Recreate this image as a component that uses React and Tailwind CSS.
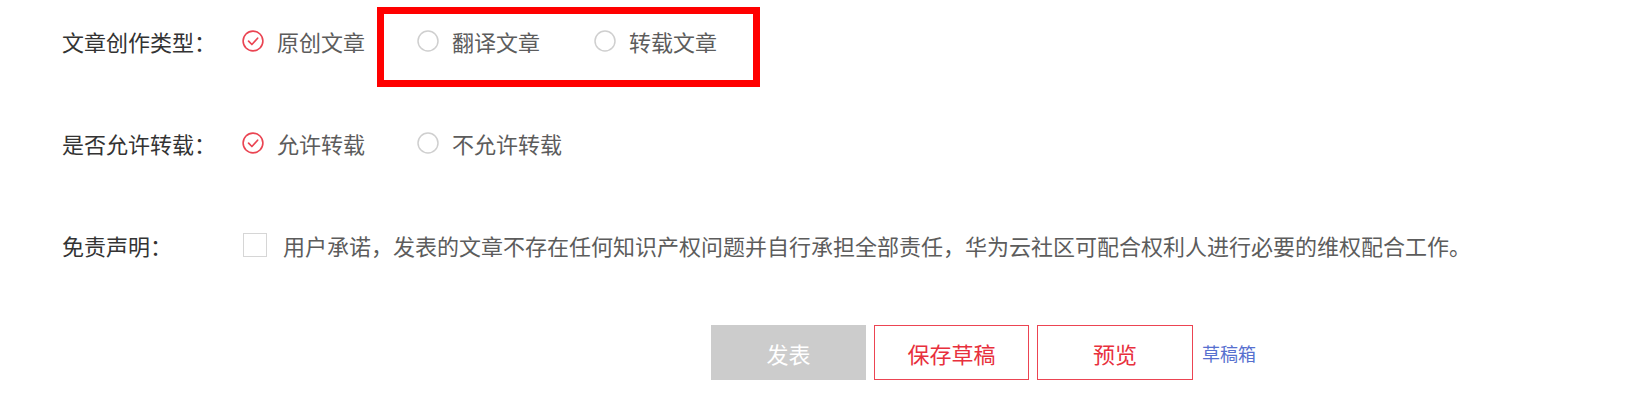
import React from "react";

const font = { fontFamily: '"Noto Sans CJK SC", "Noto Sans", sans-serif' };

function CheckedRadio() {
  return (
    <svg width="22" height="22" viewBox="0 0 22 22" className="shrink-0">
      <circle cx="11" cy="11" r="9.9" fill="none" stroke="#ea4452" strokeWidth="1.6" />
      <path d="M6.6 11.2 L9.9 14.5 L15.6 8.2" fill="none" stroke="#ea4452" strokeWidth="1.7" strokeLinecap="round" strokeLinejoin="round" />
    </svg>
  );
}

function EmptyRadio() {
  return (
    <svg width="22" height="22" viewBox="0 0 22 22" className="shrink-0">
      <circle cx="11" cy="11" r="10" fill="none" stroke="#cfcfcf" strokeWidth="1.5" />
    </svg>
  );
}

function Option({ checked, children }) {
  return (
    <div className="flex items-center gap-[13px]">
      {checked ? <CheckedRadio /> : <EmptyRadio />}
      <span className="text-[22px] leading-none text-[#5c5c5c]">{children}</span>
    </div>
  );
}

function Label({ children }) {
  return (
    <div className="w-[180px] shrink-0 text-[22px] leading-none text-[#333333]">{children}</div>
  );
}

export default function App() {
  return (
    <div className="w-[1634px] h-[395px] bg-white pl-[62px] pt-[19px]" style={font}>
      <div className="flex items-center h-[44px]">
        <Label>文章创作类型：</Label>
        <div className="flex items-center gap-[52px]">
          <Option checked>原创文章</Option>
          <div className="relative flex items-center gap-[54px]">
            <Option>翻译文章</Option>
            <Option>转载文章</Option>
            <div className="absolute left-[-40px] right-[-43px] top-[-23px] bottom-[-35px] border-[7px] border-[#ff0000] pointer-events-none" />
          </div>
        </div>
      </div>

      <div className="flex items-center h-[44px] mt-[58px]">
        <Label>是否允许转载：</Label>
        <div className="flex items-center gap-[52px]">
          <Option checked>允许转载</Option>
          <Option>不允许转载</Option>
        </div>
      </div>

      <div className="flex items-center h-[44px] mt-[58px]">
        <Label>免责声明：</Label>
        <div className="flex items-center gap-[16px] pl-px">
          <div className="w-[24px] h-[24px] border-[1.5px] border-[#d6d6d6] bg-white shrink-0" />
          <span className="text-[22px] leading-none text-[#5c5c5c]">
            用户承诺，发表的文章不存在任何知识产权问题并自行承担全部责任，华为云社区可配合权利人进行必要的维权配合工作。
          </span>
        </div>
      </div>

      <div className="flex items-center mt-[58px] pl-[649px] gap-[8px]">
        <button className="w-[155px] h-[55px] bg-[#cccccc] text-white text-[22px] leading-none flex items-center justify-center">
          发表
        </button>
        <button className="w-[155px] h-[55px] bg-white border-[1.5px] border-[#ec4452] text-[#e8303d] text-[22px] leading-none flex items-center justify-center">
          保存草稿
        </button>
        <button className="w-[156px] h-[55px] bg-white border-[1.5px] border-[#ec4452] text-[#e8303d] text-[22px] leading-none flex items-center justify-center">
          预览
        </button>
        <span className="ml-[1px] text-[18px] leading-none text-[#5770cf]">草稿箱</span>
      </div>
    </div>
  );
}
